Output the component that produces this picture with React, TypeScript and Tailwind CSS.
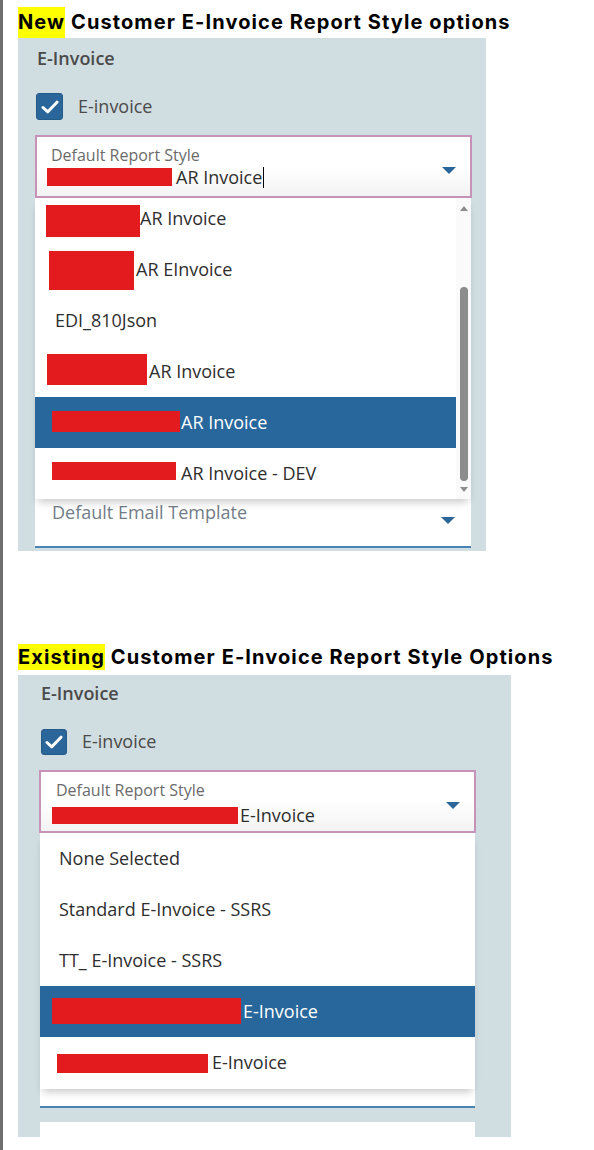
import React from "react";

const UI = { fontFamily: '"Open Sans", "Liberation Sans", sans-serif' };
const TITLE = { fontFamily: 'Inter, "Liberation Sans", sans-serif' };

function Check({ size }: { size: number }) {
  return (
    <div
      className="flex items-center justify-center rounded-[3px] bg-[#2a6699] border border-[#245a88]"
      style={{ width: size, height: size }}
    >
      <svg width="18" height="14" viewBox="0 0 18 14" fill="none">
        <path d="M2 7.5 L6.8 11.8 L16 2.2" stroke="white" strokeWidth="3" strokeLinecap="round" strokeLinejoin="round" />
      </svg>
    </div>
  );
}

function Caret() {
  return (
    <svg width="14" height="7" viewBox="0 0 14 7">
      <path d="M0 0 H14 L7 7 Z" fill="#2a6699" />
    </svg>
  );
}

function Red({ w, h, ml = 0, mt = 0 }: { w: number; h: number; ml?: number; mt?: number }) {
  return <div className="shrink-0 bg-[#e31b1e]" style={{ width: w, height: h, marginLeft: ml, marginTop: mt }} />;
}

export default function App() {
  return (
    <div className="min-h-[1150px] w-[594px] bg-white border-l-[3px] border-[#6e6e6e]" style={UI}>
      {/* Section 1 */}
      <div className="pl-[15px] pt-[7px]">
        <h1 className="text-[20px] font-bold leading-[31px] tracking-[1.1px] text-black whitespace-nowrap" style={TITLE}>
          <span className="inline-block bg-[#ffff00] leading-[31px]">New</span> Customer E-Invoice Report Style options
        </h1>
        <div className="w-[468px] h-[513px] bg-[#d0dde1] flex flex-col">
          <div className="pl-[19px] pt-[8px] text-[18px] leading-[24px] font-semibold text-[#4a4a4a]">E-Invoice</div>
          <div className="flex items-center mt-[23px] ml-[18px] gap-[15px]">
            <Check size={27} />
            <span className="text-[18px] text-[#4a4a4a]">E-invoice</span>
          </div>
          <div className="ml-[17px] mt-[15px] w-[437px] h-[63px] border-2 border-[#c792b7] bg-gradient-to-b from-white via-white to-[#f3f3f3] flex">
            <div className="flex-1 flex flex-col pt-[8px]">
              <div className="pl-[14px] text-[16px] leading-[20px] text-[#6b6b6b]">Default Report Style</div>
              <div className="flex items-center h-[22px] mt-[1px]">
                <Red w={125} h={18} ml={10} />
                <span className="text-[18px] text-[#2e2e2e] leading-[22px] ml-[4px]">AR Invoice</span>
                <span className="w-[1px] h-[21px] bg-black ml-[1px]" />
              </div>
            </div>
            <div className="pr-[14px] pt-[30px]">
              <Caret />
            </div>
          </div>
          {/* dropdown list */}
          <div className="relative z-10 ml-[17px] w-[436px] h-[301px] bg-white flex overflow-hidden shadow-[0_6px_8px_-3px_rgba(0,0,0,0.22)]">
            <div className="w-[421px] flex flex-col mt-[-5px] text-[18px] text-[#2e2e2e]">
              <div className="h-[51px] shrink-0 flex items-center">
                <Red w={94} h={32} ml={11} mt={5} />
                <span>AR Invoice</span>
              </div>
              <div className="h-[51px] shrink-0 flex items-center">
                <Red w={85} h={39} ml={14} mt={2} />
                <span className="ml-[2px]">AR EInvoice</span>
              </div>
              <div className="h-[51px] shrink-0 flex items-center pl-[20px]">EDI_810Json</div>
              <div className="h-[51px] shrink-0 flex items-center">
                <Red w={100} h={31} ml={12} mt={-4} />
                <span className="ml-[2px]">AR Invoice</span>
              </div>
              <div className="h-[51px] shrink-0 flex items-center bg-[#28679b] text-white">
                <Red w={128} h={21} ml={17} mt={-2} />
                <span className="ml-[1px]">AR Invoice</span>
              </div>
              <div className="h-[51px] shrink-0 flex items-center">
                <Red w={124} h={18} ml={17} mt={-5} />
                <span className="ml-[5px]">AR Invoice - DEV</span>
              </div>
            </div>
            <div className="w-[15px] flex flex-col items-center bg-[#fafafa]">
              <svg width="8" height="5" viewBox="0 0 8 5" className="mt-[8px]">
                <path d="M0 5 L4 0 L8 5 Z" fill="#8c8c8c" />
              </svg>
              <div className="mt-[76px] w-[8px] h-[194px] rounded-full bg-[#8c8c8c]" />
              <svg width="8" height="5" viewBox="0 0 8 5" className="mt-[6px]">
                <path d="M0 0 L8 0 L4 5 Z" fill="#8c8c8c" />
              </svg>
            </div>
          </div>
          <div className="ml-[17px] w-[436px] h-[49px] bg-white border-b-2 border-[#4b82b4] flex">
            <div className="flex-1 pl-[17px] pt-[1px] text-[18px] leading-[24px] text-[#737d88]">Default Email Template</div>
            <div className="pr-[16px] pt-[18px]">
              <Caret />
            </div>
          </div>
        </div>
      </div>

      {/* Section 2 */}
      <div className="pl-[15px] mt-[93px]">
        <h1 className="text-[20px] font-bold leading-[26px] tracking-[1.1px] text-black whitespace-nowrap" style={TITLE}>
          <span className="inline-block bg-[#ffff00] leading-[26px]">Existing</span> Customer E-Invoice Report Style Options
        </h1>
        <div className="mt-[5px] w-[493px] h-[462px] bg-[#d0dde1] flex flex-col">
          <div className="pl-[23px] pt-[6px] text-[18px] leading-[24px] font-semibold text-[#4a4a4a]">E-Invoice</div>
          <div className="flex items-center mt-[23px] ml-[23px] gap-[15px]">
            <Check size={26} />
            <span className="text-[18px] text-[#4a4a4a]">E-invoice</span>
          </div>
          <div className="ml-[21px] mt-[15px] w-[437px] h-[63px] border-2 border-[#c792b7] bg-gradient-to-b from-white via-white to-[#f3f3f3] flex">
            <div className="flex-1 flex flex-col pt-[8px]">
              <div className="pl-[15px] text-[16px] leading-[20px] text-[#6b6b6b]">Default Report Style</div>
              <div className="flex items-center h-[22px] mt-[4px]">
                <Red w={186} h={17} ml={11} />
                <span className="text-[18px] text-[#2e2e2e] leading-[22px] ml-[2px]">E-Invoice</span>
              </div>
            </div>
            <div className="pr-[14px] pt-[30px]">
              <Caret />
            </div>
          </div>
          <div className="relative z-10 ml-[22px] w-[435px] h-[256px] bg-white flex flex-col text-[18px] text-[#2e2e2e] shadow-[0_6px_8px_-3px_rgba(0,0,0,0.22)]">
            <div className="h-[51px] shrink-0 flex items-center pl-[19px]">None Selected</div>
            <div className="h-[51px] shrink-0 flex items-center pl-[19px]">Standard E-Invoice - SSRS</div>
            <div className="h-[51px] shrink-0 flex items-center pl-[19px]">TT_ E-Invoice - SSRS</div>
            <div className="h-[51px] shrink-0 flex items-center bg-[#28679b] text-white">
              <Red w={189} h={26} ml={12} mt={-2} />
              <span className="ml-[2px]">E-Invoice</span>
            </div>
            <div className="h-[51px] shrink-0 flex items-center">
              <Red w={151} h={19} ml={17} mt={1} />
              <span className="ml-[4px]">E-Invoice</span>
            </div>
          </div>
          <div className="ml-[22px] w-[435px] h-[19px] bg-white border-b-2 border-[#4b82b4]" />
          <div className="ml-[22px] mt-[14px] w-[435px] flex-1 bg-white" />
        </div>
      </div>
    </div>
  );
}
